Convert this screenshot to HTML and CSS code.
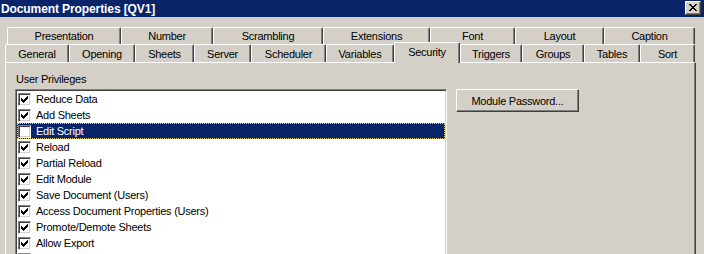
FILE: index.html
```html
<!DOCTYPE html>
<html lang="en">
<head>
    <meta charset="UTF-8">
    <title>Document Properties [QV1]</title>
    <link rel="stylesheet" href="styles.css">
</head>
<body>

<div class="titlebar">
    <span class="title">Document Properties [QV1]</span>
    <button class="close-btn" type="button" aria-label="Close">
        <svg width="8" height="7" viewBox="0 0 8 7" shape-rendering="crispEdges">
            <path d="M0 0h2v1h-2z M6 0h2v1h-2z M1 1h2v1h-2z M5 1h2v1h-2z M2 2h4v1h-4z M3 3h2v1h-2z M2 4h4v1h-4z M1 5h2v1h-2z M5 5h2v1h-2z M0 6h2v1h-2z M6 6h2v1h-2z" fill="#000"/>
        </svg>
    </button>
</div>

<div class="dialog">
    <div class="tab-row tab-row-top">
        <div class="tab">Presentation</div>
        <div class="tab">Number</div>
        <div class="tab">Scrambling</div>
        <div class="tab">Extensions</div>
        <div class="tab">Font</div>
        <div class="tab">Layout</div>
        <div class="tab">Caption</div>
    </div>
    <div class="tab-row tab-row-bottom">
        <div class="tab">General</div>
        <div class="tab">Opening</div>
        <div class="tab">Sheets</div>
        <div class="tab">Server</div>
        <div class="tab">Scheduler</div>
        <div class="tab">Variables</div>
        <div class="tab active">Security</div>
        <div class="tab">Triggers</div>
        <div class="tab">Groups</div>
        <div class="tab">Tables</div>
        <div class="tab">Sort</div>
    </div>

    <div class="panel">
        <div class="privileges">
            <div class="group-label">User Privileges</div>
            <ul class="listbox">
                <li class="item"><span class="check"><svg width="7" height="7" viewBox="0 0 7 7" shape-rendering="crispEdges"><path d="M6 0h1v1h-1z M5 1h2v1h-2z M0 2h1v1h-1z M4 2h3v1h-3z M0 3h2v1h-2z M3 3h3v1h-3z M0 4h5v1h-5z M1 5h3v1h-3z M2 6h1v1h-1z"/></svg></span><span class="label">Reduce Data</span></li>
                <li class="item"><span class="check"><svg width="7" height="7" viewBox="0 0 7 7" shape-rendering="crispEdges"><path d="M6 0h1v1h-1z M5 1h2v1h-2z M0 2h1v1h-1z M4 2h3v1h-3z M0 3h2v1h-2z M3 3h3v1h-3z M0 4h5v1h-5z M1 5h3v1h-3z M2 6h1v1h-1z"/></svg></span><span class="label">Add Sheets</span></li>
                <li class="item selected"><span class="check"></span><span class="label">Edit Script</span></li>
                <li class="item"><span class="check"><svg width="7" height="7" viewBox="0 0 7 7" shape-rendering="crispEdges"><path d="M6 0h1v1h-1z M5 1h2v1h-2z M0 2h1v1h-1z M4 2h3v1h-3z M0 3h2v1h-2z M3 3h3v1h-3z M0 4h5v1h-5z M1 5h3v1h-3z M2 6h1v1h-1z"/></svg></span><span class="label">Reload</span></li>
                <li class="item"><span class="check"><svg width="7" height="7" viewBox="0 0 7 7" shape-rendering="crispEdges"><path d="M6 0h1v1h-1z M5 1h2v1h-2z M0 2h1v1h-1z M4 2h3v1h-3z M0 3h2v1h-2z M3 3h3v1h-3z M0 4h5v1h-5z M1 5h3v1h-3z M2 6h1v1h-1z"/></svg></span><span class="label">Partial Reload</span></li>
                <li class="item"><span class="check"><svg width="7" height="7" viewBox="0 0 7 7" shape-rendering="crispEdges"><path d="M6 0h1v1h-1z M5 1h2v1h-2z M0 2h1v1h-1z M4 2h3v1h-3z M0 3h2v1h-2z M3 3h3v1h-3z M0 4h5v1h-5z M1 5h3v1h-3z M2 6h1v1h-1z"/></svg></span><span class="label">Edit Module</span></li>
                <li class="item"><span class="check"><svg width="7" height="7" viewBox="0 0 7 7" shape-rendering="crispEdges"><path d="M6 0h1v1h-1z M5 1h2v1h-2z M0 2h1v1h-1z M4 2h3v1h-3z M0 3h2v1h-2z M3 3h3v1h-3z M0 4h5v1h-5z M1 5h3v1h-3z M2 6h1v1h-1z"/></svg></span><span class="label">Save Document (Users)</span></li>
                <li class="item"><span class="check"><svg width="7" height="7" viewBox="0 0 7 7" shape-rendering="crispEdges"><path d="M6 0h1v1h-1z M5 1h2v1h-2z M0 2h1v1h-1z M4 2h3v1h-3z M0 3h2v1h-2z M3 3h3v1h-3z M0 4h5v1h-5z M1 5h3v1h-3z M2 6h1v1h-1z"/></svg></span><span class="label">Access Document Properties (Users)</span></li>
                <li class="item"><span class="check"><svg width="7" height="7" viewBox="0 0 7 7" shape-rendering="crispEdges"><path d="M6 0h1v1h-1z M5 1h2v1h-2z M0 2h1v1h-1z M4 2h3v1h-3z M0 3h2v1h-2z M3 3h3v1h-3z M0 4h5v1h-5z M1 5h3v1h-3z M2 6h1v1h-1z"/></svg></span><span class="label">Promote/Demote Sheets</span></li>
                <li class="item"><span class="check"><svg width="7" height="7" viewBox="0 0 7 7" shape-rendering="crispEdges"><path d="M6 0h1v1h-1z M5 1h2v1h-2z M0 2h1v1h-1z M4 2h3v1h-3z M0 3h2v1h-2z M3 3h3v1h-3z M0 4h5v1h-5z M1 5h3v1h-3z M2 6h1v1h-1z"/></svg></span><span class="label">Allow Export</span></li>
                <li class="item"><span class="check"><svg width="7" height="7" viewBox="0 0 7 7" shape-rendering="crispEdges"><path d="M6 0h1v1h-1z M5 1h2v1h-2z M0 2h1v1h-1z M4 2h3v1h-3z M0 3h2v1h-2z M3 3h3v1h-3z M0 4h5v1h-5z M1 5h3v1h-3z M2 6h1v1h-1z"/></svg></span></li>
            </ul>
        </div>
        <div class="side">
            <button class="btn" type="button">Module Password...</button>
        </div>
    </div>
</div>

</body>
</html>
```

FILE: styles.css
```css
body {
    margin: 0;
    background-color: #d4d0c8;
    font-family: "Liberation Sans", Arial, sans-serif;
    font-size: 11px;
    color: #000;
    overflow: hidden;
}

/* title bar */

.titlebar {
    height: 17px;
    background-color: #0a246a;
    display: flex;
    justify-content: space-between;
    align-items: flex-start;
}

.title {
    color: #fff;
    font-weight: bold;
    font-size: 12px;
    line-height: 17px;
    padding: 1px 0 0 1px;
    letter-spacing: -0.1px;
}

.close-btn {
    width: 16px;
    height: 14px;
    margin: 1px 3px 0 0;
    padding: 0;
    box-sizing: border-box;
    background-color: #d4d0c8;
    border: 1px solid;
    border-color: #fff #404040 #404040 #fff;
    box-shadow: inset -1px -1px #808080;
    display: flex;
    align-items: center;
    justify-content: center;
}

.close-btn svg {
    display: block;
    margin-top: -1px;
}

/* tabs */

.dialog {
    padding-top: 10px;
}

.tab-row {
    display: flex;
}

.tab-row-top {
    margin-left: 7px;
}

.tab-row-bottom {
    margin-left: 5px;
}

.tab {
    box-sizing: border-box;
    border-top: 1px solid #fff;
    border-left: 1px solid #fff;
    border-right: 1px solid #404040;
    border-radius: 2px 2px 0 0;
    box-shadow: inset -1px 0 #808080;
    text-align: center;
    line-height: 13px;
    letter-spacing: -0.25px;
    white-space: nowrap;
}

.tab-row-top .tab {
    height: 17px;
    padding-top: 2px;
}

.tab-row-bottom .tab {
    height: 18px;
    padding-top: 3px;
}

.tab-row-top .tab:nth-child(1) { width: 114px; }
.tab-row-top .tab:nth-child(2) { width: 92px; }
.tab-row-top .tab:nth-child(3) { width: 110px; }
.tab-row-top .tab:nth-child(4) { width: 107px; }
.tab-row-top .tab:nth-child(5) { width: 85px; }
.tab-row-top .tab:nth-child(6) { width: 89px; }
.tab-row-top .tab:nth-child(7) { width: 91px; }

.tab-row-bottom .tab:nth-child(1) { width: 64px; }
.tab-row-bottom .tab:nth-child(2) { width: 66px; }
.tab-row-bottom .tab:nth-child(3) { width: 59px; }
.tab-row-bottom .tab:nth-child(4) { width: 57px; }
.tab-row-bottom .tab:nth-child(5) { width: 75px; }
.tab-row-bottom .tab:nth-child(6) { width: 68px; }
.tab-row-bottom .tab:nth-child(7) { width: 66px; }
.tab-row-bottom .tab:nth-child(8) { width: 62px; }
.tab-row-bottom .tab:nth-child(9) { width: 62px; }
.tab-row-bottom .tab:nth-child(10) { width: 56px; }
.tab-row-bottom .tab:nth-child(11) { width: 55px; }

.tab-row-bottom .tab.active {
    position: relative;
    z-index: 1;
    height: 21px;
    margin-top: -2px;
    margin-bottom: -1px;
    background-color: #d4d0c8;
}

/* panel */

.panel {
    width: 691px;
    height: 200px;
    margin-left: 5px;
    box-sizing: border-box;
    border-top: 1px solid #fff;
    border-left: 1px solid #fff;
    border-right: 1px solid #404040;
    box-shadow: inset -1px 0 #808080;
    padding: 10px 0 0 9px;
    display: flex;
    gap: 9px;
}

.group-label {
    line-height: 13px;
    margin: 0 0 3px 1px;
    letter-spacing: -0.25px;
}

.listbox {
    list-style: none;
    margin: 0;
    padding: 0;
    width: 432px;
    height: 180px;
    box-sizing: border-box;
    background-color: #fff;
    border: 1px solid;
    border-color: #808080 #fff #fff #808080;
    box-shadow: inset 1px 1px #404040, inset -1px -1px #d4d0c8;
    padding: 1px;
}

.item {
    height: 16px;
    display: flex;
    align-items: center;
}

.item .label {
    line-height: 15px;
    margin-left: 5px;
    letter-spacing: -0.25px;
    white-space: nowrap;
}

.item.selected {
    background-color: #0a246a;
    color: #fff;
    outline: 1px dotted #d8c878;
    outline-offset: -1px;
}

.check {
    width: 13px;
    height: 13px;
    margin-left: 1px;
    box-sizing: border-box;
    background-color: #fff;
    border: 1px solid;
    border-color: #808080 #fff #fff #808080;
    box-shadow: inset 1px 1px #404040, inset -1px -1px #d4d0c8;
    padding: 2px;
    flex-shrink: 0;
}

.check svg {
    display: block;
}

/* buttons */

.side {
    padding-top: 16px;
}

.btn {
    width: 123px;
    height: 23px;
    box-sizing: border-box;
    background-color: #d4d0c8;
    border: 1px solid;
    border-color: #fff #404040 #404040 #fff;
    box-shadow: inset -1px -1px #808080;
    font-family: "Liberation Sans", Arial, sans-serif;
    font-size: 11px;
    letter-spacing: -0.25px;
    color: #000;
    padding: 0;
}
```
